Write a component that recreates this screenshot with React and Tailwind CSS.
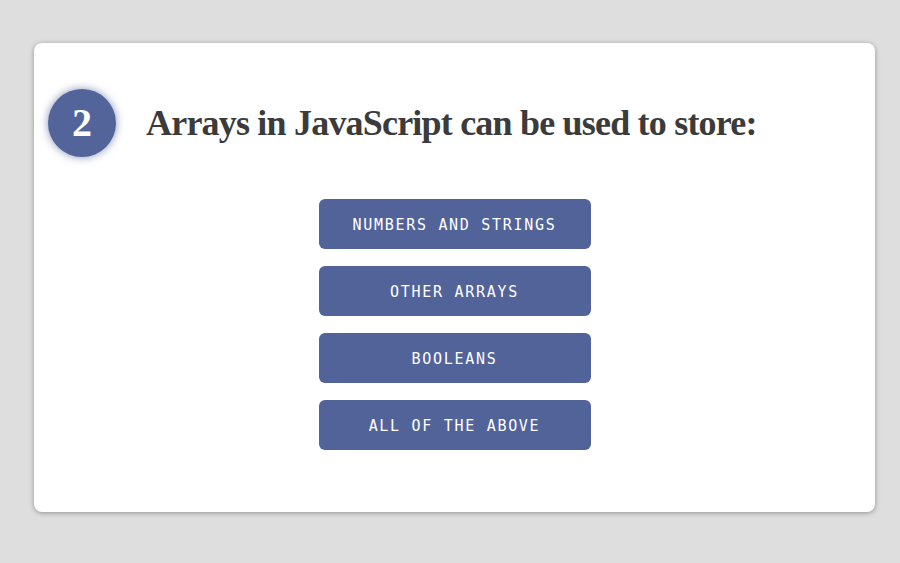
import React from 'react';

const answers = ['Numbers and Strings', 'Other Arrays', 'Booleans', 'All of the above'];

export default function App() {
  return (
    <div className="w-[900px] h-[563px] bg-[#dedede] pt-[43px] pl-[34px]">
      <div className="w-[841px] h-[469px] bg-white rounded-lg shadow-[0_1px_5px_rgba(0,0,0,0.35)] pt-[46px]">
        <div className="flex items-center pl-[14px] gap-[30px]">
          <div className="w-[68px] h-[68px] rounded-full bg-[#52649a] shadow-[0_0_8px_rgba(82,100,154,0.7)] flex items-center justify-center text-white font-bold text-[40px] leading-none font-['Liberation_Serif',serif]">
            2
          </div>
          <h1 className="text-[#3b3b3b] font-bold text-[36px] tracking-[-0.8px] font-['Liberation_Serif',serif]">
            Arrays in JavaScript can be used to store:
          </h1>
        </div>
        <div className="flex flex-col items-center gap-[17px] mt-[42px]">
          {answers.map((a) => (
            <button
              key={a}
              className="w-[272px] h-[50px] pt-[3px] rounded-md bg-[#52639a] text-white uppercase text-[15px] tracking-[1.7px] font-['DejaVu_Sans_Mono',monospace]"
            >
              {a}
            </button>
          ))}
        </div>
      </div>
    </div>
  );
}
